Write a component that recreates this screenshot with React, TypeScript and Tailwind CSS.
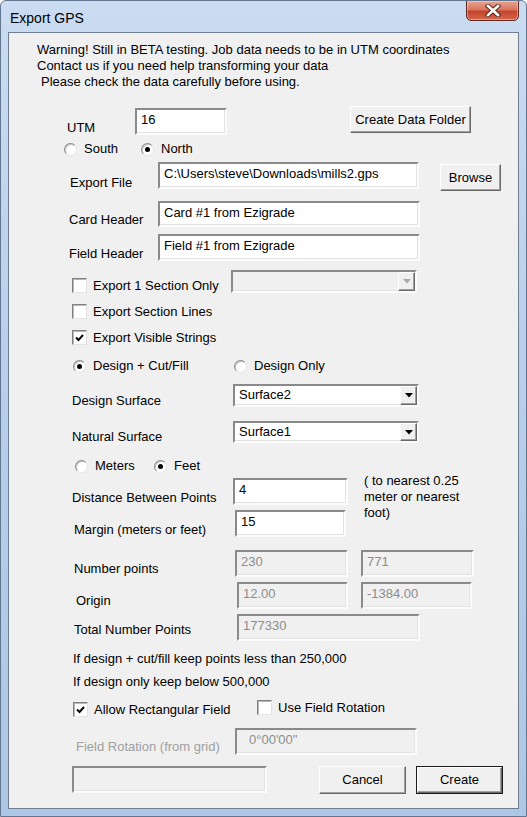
import React from 'react';

const sunken =
  'border-2 border-t-[#8a8a8a] border-l-[#8a8a8a] border-b-[#fbfbfb] border-r-[#fbfbfb] shadow-[inset_-1px_-1px_0_#e3e3e3]';
const raised =
  'border border-t-white border-l-white border-b-[#696969] border-r-[#696969] shadow-[inset_-1px_-1px_0_#a0a0a0]';

function TextBox({
  size,
  value,
  disabled,
  className = '',
}: {
  size: string;
  value?: string;
  disabled?: boolean;
  className?: string;
}) {
  return (
    <div
      className={`shrink-0 overflow-hidden whitespace-nowrap pl-1 pt-[2px] leading-4 ${sunken} ${size} ${
        disabled ? 'bg-[#f0f0f0] text-[#8d8d8d]' : 'bg-white text-black'
      } ${className}`}
    >
      {value}
    </div>
  );
}

function Arrow({ disabled }: { disabled?: boolean }) {
  return (
    <svg width="8" height="5" viewBox="0 0 8 5">
      <polygon points="0,0 8,0 4,4.5" fill={disabled ? '#a8a8a8' : '#000'} />
    </svg>
  );
}

function Combo({ size, value, disabled }: { size: string; value?: string; disabled?: boolean }) {
  return (
    <div className={`shrink-0 flex ${sunken} ${size} ${disabled ? 'bg-[#f0f0f0]' : 'bg-white'}`}>
      <div className="flex-1 pl-1 pt-[1px] leading-4 whitespace-nowrap overflow-hidden">{value}</div>
      <div className={`w-[17px] h-full flex items-center justify-center bg-[#f0f0f0] ${raised}`}>
        <Arrow disabled={disabled} />
      </div>
    </div>
  );
}

function Button({ size, label, isDefault }: { size: string; label: string; isDefault?: boolean }) {
  return (
    <div className={`shrink-0 ${size} ${isDefault ? 'border border-[#1a1a1a]' : ''}`}>
      <div className={`w-full h-full flex items-center justify-center bg-[#f0f0f0] ${raised}`}>{label}</div>
    </div>
  );
}

function Radio({ label, checked, className = '' }: { label: string; checked?: boolean; className?: string }) {
  return (
    <div className={`shrink-0 flex items-center h-4 ${className}`}>
      <span className="w-[13px] h-[13px] rounded-full bg-white border border-t-[#8a8a8a] border-l-[#8a8a8a] border-r-[#e6e6e6] border-b-[#e6e6e6] shadow-[inset_1px_1px_0_#c4c4c4] flex items-center justify-center">
        {checked && <span className="w-[5px] h-[5px] rounded-full bg-black" />}
      </span>
      <span className="ml-[7px] whitespace-nowrap">{label}</span>
    </div>
  );
}

function Check({ label, checked, className = '' }: { label: string; checked?: boolean; className?: string }) {
  return (
    <div className={`shrink-0 flex items-center h-[15px] ${className}`}>
      <span className="w-[15px] h-[15px] bg-white border border-t-[#808080] border-l-[#808080] border-r-[#e3e3e3] border-b-[#e3e3e3] shadow-[inset_1px_1px_0_#b8b8b8] flex items-center justify-center">
        {checked && (
          <svg width="11" height="11" viewBox="0 0 11 11">
            <polyline points="2,5.5 4.5,8 9,3" fill="none" stroke="#000" strokeWidth="1.9" />
          </svg>
        )}
      </span>
      <span className="ml-[6px] whitespace-nowrap">{label}</span>
    </div>
  );
}

export default function App() {
  return (
    <div className="w-[527px] h-[817px] overflow-hidden flex flex-col bg-[linear-gradient(180deg,#cadcf1_0%,#b9cfea_45%,#aec7e5_100%)] border border-[#62778f] rounded-t-[6px] font-['Liberation_Sans',Arial,sans-serif] text-[13px] leading-4 text-black">
      {/* title bar */}
      <div className="h-[31px] flex justify-between shrink-0">
        <div className="pl-[9px] pt-[8px] text-[14px] leading-[18px] text-black">Export GPS</div>
        <div className="mr-[7px] w-[53px] h-[21px] -mt-px rounded-b-[5px] border border-[#5e2a22] bg-[linear-gradient(180deg,#e9a593_0%,#d9765f_45%,#c5452c_55%,#d5674c_100%)] shadow-[inset_0_0_0_1px_rgba(255,255,255,0.35)] flex items-center justify-center">
          <svg width="16" height="13" viewBox="0 0 16 13">
            <path
              d="M3 2 L13 11 M13 2 L3 11"
              stroke="#5b2a22"
              strokeWidth="4.6"
              strokeLinecap="square"
              fill="none"
            />
            <path d="M3 2 L13 11 M13 2 L3 11" stroke="#ffffff" strokeWidth="2.6" strokeLinecap="square" fill="none" />
          </svg>
        </div>
      </div>

      {/* client area */}
      <div className="mx-[7px] mb-[7px] flex-1 bg-[#f0f0f0] border border-[#6f7d90] flex flex-col">
        <div className="h-[9px]" />
        <div className="h-[64px] pl-[28px]">
          <div>Warning! Still in BETA testing. Job data needs to be in UTM coordinates</div>
          <div>Contact us if you need help transforming your data</div>
          <div className="pl-[4px]">Please check the data carefully before using.</div>
        </div>

        {/* UTM */}
        <div className="h-[35px] flex items-start pl-[58px]">
          <div className="w-[68px] mt-[14px] shrink-0">UTM</div>
          <TextBox size="w-[92px] h-[27px]" value="16" className="mt-[2px]" />
          <div className="w-[123px] shrink-0" />
          <Button size="w-[121px] h-[27px]" label="Create Data Folder" />
        </div>

        {/* South / North */}
        <div className="h-[21px] flex items-start pl-[55px]">
          <Radio label="South" className="w-[77px]" />
          <Radio label="North" checked />
        </div>

        {/* Export file */}
        <div className="h-[39px] flex items-start pl-[61px]">
          <div className="w-[88px] mt-[13px] shrink-0">Export File</div>
          <TextBox size="w-[261px] h-[27px]" value="C:\Users\steve\Downloads\mills2.gps" />
          <div className="w-[21px] shrink-0" />
          <div className="mt-[2px]">
            <Button size="w-[61px] h-[27px]" label="Browse" />
          </div>
        </div>

        {/* Card header */}
        <div className="h-[33px] flex items-start pl-[60px]">
          <div className="w-[89px] mt-[11px] shrink-0">Card Header</div>
          <TextBox size="w-[262px] h-[26px]" value="Card #1 from Ezigrade" />
        </div>

        {/* Field header */}
        <div className="h-[36px] flex items-start pl-[60px]">
          <div className="w-[89px] mt-[12px] shrink-0">Field Header</div>
          <TextBox size="w-[262px] h-[27px]" value="Field #1 from Ezigrade" />
        </div>

        {/* checkboxes */}
        <div className="h-[31px] flex items-start pl-[63px]">
          <Check label="Export 1 Section Only" className="w-[159px] mt-[8px]" />
          <Combo size="w-[186px] h-[23px]" disabled />
        </div>
        <div className="h-[27px] flex items-start pl-[63px]">
          <Check label="Export Section Lines" className="mt-[3px]" />
        </div>
        <div className="h-[30px] flex items-start pl-[63px]">
          <Check label="Export Visible Strings" checked className="mt-[2px]" />
        </div>

        {/* design radios */}
        <div className="h-[26px] flex items-start pl-[64px]">
          <Radio label="Design + Cut/Fill" checked className="w-[161px]" />
          <Radio label="Design Only" />
        </div>

        {/* surfaces */}
        <div className="h-[37px] flex items-start pl-[63px]">
          <div className="w-[161px] mt-[9px] shrink-0">Design Surface</div>
          <Combo size="w-[186px] h-[23px]" value="Surface2" />
        </div>
        <div className="h-[37px] flex items-start pl-[63px]">
          <div className="w-[161px] mt-[8px] shrink-0">Natural Surface</div>
          <Combo size="w-[186px] h-[22px]" value="Surface1" />
        </div>

        {/* meters / feet */}
        <div className="h-[15px] flex items-start pl-[66px]">
          <Radio label="Meters" className="w-[79px]" />
          <Radio label="Feet" checked />
        </div>

        {/* distance + margin with note */}
        <div className="h-[77px] flex items-start">
          <div className="w-[339px] shrink-0 flex flex-col pt-[5px]">
            <div className="h-[32px] flex items-start pl-[63px]">
              <div className="w-[161px] mt-[12px] shrink-0 whitespace-nowrap">Distance Between Points</div>
              <TextBox size="w-[115px] h-[27px]" value="4" />
            </div>
            <div className="h-[40px] flex items-start pl-[65px]">
              <div className="w-[161px] mt-[12px] shrink-0 whitespace-nowrap">Margin (meters or feet)</div>
              <TextBox size="w-[111px] h-[27px]" value="15" />
            </div>
          </div>
          <div className="ml-[16px]">
            <div>( to nearest 0.25</div>
            <div>meter or nearest</div>
            <div>foot)</div>
          </div>
        </div>

        {/* computed */}
        <div className="h-[32px] flex items-start pl-[65px]">
          <div className="w-[161px] mt-[11px] shrink-0">Number points</div>
          <TextBox size="w-[113px] h-[27px]" value="230" disabled />
          <div className="w-[13px] shrink-0" />
          <TextBox size="w-[113px] h-[27px]" value="771" disabled />
        </div>
        <div className="h-[32px] flex items-start pl-[67px]">
          <div className="w-[161px] mt-[11px] shrink-0">Origin</div>
          <TextBox size="w-[111px] h-[27px]" value="12.00" disabled />
          <div className="w-[13px] shrink-0" />
          <TextBox size="w-[111px] h-[27px]" value="-1384.00" disabled />
        </div>
        <div className="h-[36px] flex items-start pl-[65px]">
          <div className="w-[163px] mt-[8px] shrink-0">Total Number Points</div>
          <TextBox size="w-[183px] h-[27px]" value="177330" disabled />
        </div>

        <div className="h-[23px] pl-[64px] pt-[1px]">If design + cut/fill keep points less than 250,000</div>
        <div className="h-[27px] pl-[64px] pt-[1px]">If design only keep below 500,000</div>

        {/* rectangular / rotation */}
        <div className="h-[28px] flex items-start pl-[64px]">
          <Check label="Allow Rectangular Field" checked className="w-[184px] mt-[2px]" />
          <Check label="Use Field Rotation" />
        </div>

        <div className="h-[38px] flex items-start pl-[67px]">
          <div className="w-[159px] mt-[11px] shrink-0 text-[#a0a0a0]">Field Rotation (from grid)</div>
          <TextBox size="w-[182px] h-[27px]" value={'0°00\'00"'} disabled className="pl-[12px]" />
        </div>

        {/* bottom buttons */}
        <div className="h-[28px] flex items-start pl-[63px]">
          <TextBox size="w-[195px] h-[27px]" disabled />
          <div className="w-[52px] shrink-0" />
          <Button size="w-[87px] h-[28px]" label="Cancel" />
          <div className="w-[10px] shrink-0" />
          <Button size="w-[87px] h-[28px]" label="Create" isDefault />
        </div>
      </div>
    </div>
  );
}
